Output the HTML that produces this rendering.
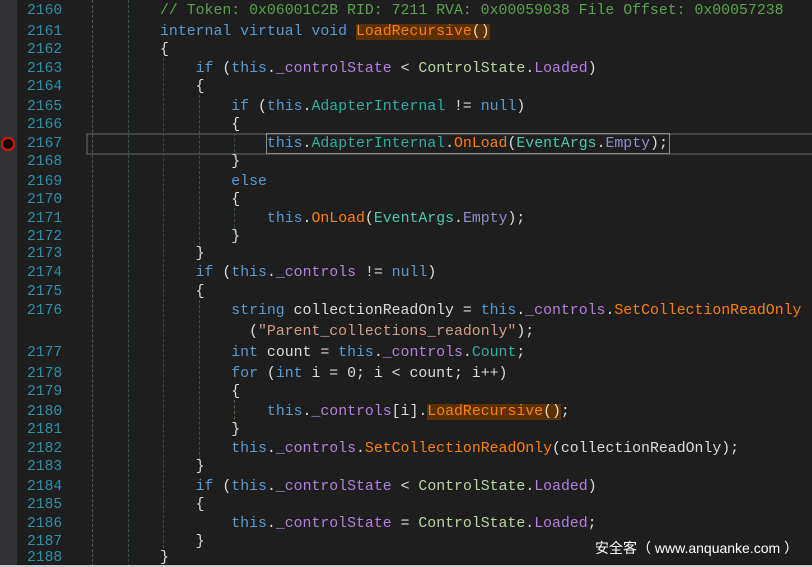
<html><head><style>
body{margin:0;width:812px;height:567px;background:#1e1e1e;overflow:hidden;position:relative;font-family:"Liberation Mono",monospace}
.g{position:absolute;left:0;top:0;width:17px;height:567px;background:#333337}
.ln{position:absolute;left:27px;width:40px;font-size:14.65px;color:#2b91af;line-height:18px;white-space:pre;margin-top:1px}
.c{position:absolute;left:160px;font-size:14.85px;color:#dcdcdc;line-height:18px;white-space:pre;margin-top:1px}
.k{color:#569cd6}.cm{color:#57a64a}.m{color:#ff8000}.t{color:#4ec9b0}.p{color:#2bb0a6}.e{color:#8f8fd0}.f{color:#b77fe0}.en{color:#b8d7a3}.s{color:#d69d85}.l{color:#b77fe0}
.hl{background:#5c3000}
.v{position:absolute;top:0;height:567px;border-left:1px dashed}
</style></head><body>
<div class="g"></div>
<div class="v" style="left:92px;border-color:#555"></div>
<div class="v" style="left:128px;border-color:#2e5a3a"></div>
<div class="v" style="left:163px;top:58px;height:490px;border-color:#2d4a66"></div>
<div class="v" style="left:199px;top:95px;height:160px;border-color:#2e5a3a"></div>
<div class="v" style="left:199px;top:300px;height:160px;border-color:#2e5a3a"></div>
<div class="v" style="left:234px;top:133px;height:25px;border-color:#2e5a3a"></div>
<div class="v" style="left:234px;top:208px;height:25px;border-color:#2e5a3a"></div>
<div class="v" style="left:234px;top:400px;height:25px;border-color:#6a5a2a"></div>
<div style="position:absolute;left:86px;top:133px;width:730px;height:18px;border:2px solid #464646"></div>
<div style="position:absolute;left:266px;top:133px;width:402px;height:19px;border:1px solid #8a8a8a"></div>
<div style="position:absolute;left:1px;top:137px;width:10px;height:10px;border-radius:50%;background:#000;border:2px solid #e51400"></div>
<div class="ln" style="top:1px">2160</div><div class="c" style="top:1px"><span class="cm">// Token: 0x06001C2B RID: 7211 RVA: 0x00059038 File Offset: 0x00057238</span></div>
<div class="ln" style="top:22px">2161</div><div class="c" style="top:22px"><span class="k">internal virtual void</span> <span class="m hl">LoadRecursive</span><span class="hl">()</span></div>
<div class="ln" style="top:40px">2162</div><div class="c" style="top:40px">{</div>
<div class="ln" style="top:59px">2163</div><div class="c" style="top:59px">    <span class="k">if</span> (<span class="k">this</span>.<span class="f">_controlState</span> &lt; <span class="en">ControlState</span>.<span class="l">Loaded</span>)</div>
<div class="ln" style="top:77px">2164</div><div class="c" style="top:77px">    {</div>
<div class="ln" style="top:97px">2165</div><div class="c" style="top:97px">        <span class="k">if</span> (<span class="k">this</span>.<span class="p">AdapterInternal</span> != <span class="k">null</span>)</div>
<div class="ln" style="top:115px">2166</div><div class="c" style="top:115px">        {</div>
<div class="ln" style="top:134px">2167</div><div class="c" style="top:134px">            <span class="k">this</span>.<span class="p">AdapterInternal</span>.<span class="m">OnLoad</span>(<span class="t">EventArgs</span>.<span class="e">Empty</span>);</div>
<div class="ln" style="top:152px">2168</div><div class="c" style="top:152px">        }</div>
<div class="ln" style="top:172px">2169</div><div class="c" style="top:172px">        <span class="k">else</span></div>
<div class="ln" style="top:190px">2170</div><div class="c" style="top:190px">        {</div>
<div class="ln" style="top:209px">2171</div><div class="c" style="top:209px">            <span class="k">this</span>.<span class="m">OnLoad</span>(<span class="t">EventArgs</span>.<span class="e">Empty</span>);</div>
<div class="ln" style="top:227px">2172</div><div class="c" style="top:227px">        }</div>
<div class="ln" style="top:244px">2173</div><div class="c" style="top:244px">    }</div>
<div class="ln" style="top:263px">2174</div><div class="c" style="top:263px">    <span class="k">if</span> (<span class="k">this</span>.<span class="f">_controls</span> != <span class="k">null</span>)</div>
<div class="ln" style="top:282px">2175</div><div class="c" style="top:282px">    {</div>
<div class="ln" style="top:301px">2176</div><div class="c" style="top:301px">        <span class="k">string</span> collectionReadOnly = <span class="k">this</span>.<span class="f">_controls</span>.<span class="m">SetCollectionReadOnly</span></div>
<div class="c" style="top:322px">          (<span class="s">"Parent_collections_readonly"</span>);</div>
<div class="ln" style="top:343px">2177</div><div class="c" style="top:343px">        <span class="k">int</span> count = <span class="k">this</span>.<span class="f">_controls</span>.<span class="p">Count</span>;</div>
<div class="ln" style="top:364px">2178</div><div class="c" style="top:364px">        <span class="k">for</span> (<span class="k">int</span> i = 0; i &lt; count; i++)</div>
<div class="ln" style="top:382px">2179</div><div class="c" style="top:382px">        {</div>
<div class="ln" style="top:402px">2180</div><div class="c" style="top:402px">            <span class="k">this</span>.<span class="f">_controls</span>[i].<span class="m hl">LoadRecursive</span><span class="hl">()</span>;</div>
<div class="ln" style="top:420px">2181</div><div class="c" style="top:420px">        }</div>
<div class="ln" style="top:439px">2182</div><div class="c" style="top:439px">        <span class="k">this</span>.<span class="f">_controls</span>.<span class="m">SetCollectionReadOnly</span>(collectionReadOnly);</div>
<div class="ln" style="top:457px">2183</div><div class="c" style="top:457px">    }</div>
<div class="ln" style="top:477px">2184</div><div class="c" style="top:477px">    <span class="k">if</span> (<span class="k">this</span>.<span class="f">_controlState</span> &lt; <span class="en">ControlState</span>.<span class="l">Loaded</span>)</div>
<div class="ln" style="top:495px">2185</div><div class="c" style="top:495px">    {</div>
<div class="ln" style="top:514px">2186</div><div class="c" style="top:514px">        <span class="k">this</span>.<span class="f">_controlState</span> = <span class="en">ControlState</span>.<span class="l">Loaded</span>;</div>
<div class="ln" style="top:532px">2187</div><div class="c" style="top:532px">    }</div>
<div class="ln" style="top:548px">2188</div><div class="c" style="top:548px">}</div>
<div style="position:absolute;left:595px;top:538px;font-family:'Liberation Sans','Noto Sans CJK SC',sans-serif;font-size:14px;color:#fff;white-space:pre">安全客（ www.anquanke.com ）</div>
<div style="position:absolute;left:0;top:565px;width:812px;height:2px;background:#ccc"></div>
</body></html>
